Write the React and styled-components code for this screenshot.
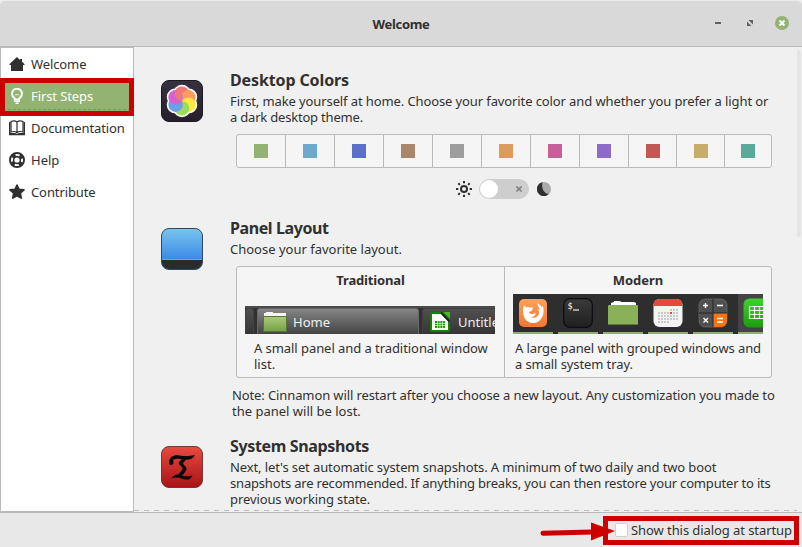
import React from "react";
import styled, { createGlobalStyle } from "styled-components";

const Global = createGlobalStyle`
  *, *::before, *::after { box-sizing: border-box; }
  body { margin: 0; background: #f0f0f0; overflow: hidden; }
`;

const Window = styled.div`
  position: relative;
  width: 802px;
  height: 547px;
  display: grid;
  grid-template-rows: 47px 466px 34px;
  font-family: "Noto Sans", "Open Sans", sans-serif;
  font-size: 13px;
  line-height: 16px;
  color: #303030;
  background: #f0f0f0;
  overflow: hidden;
`;

const Header = styled.header`
  display: grid;
  grid-template-columns: 1fr auto 1fr;
  align-items: center;
  background: #d9d9d9;
  border-top: 1px solid #ececec;
  border-bottom: 1px solid #b9b9b9;
  border-radius: 5px 5px 0 0;
  font-weight: 700;
`;

const Controls = styled.div`
  display: flex;
  justify-content: flex-end;
  padding: 0 12px 1px 0;
`;

const Body = styled.div`
  display: grid;
  grid-template-columns: 134px 1fr;
  min-height: 0;
`;

const Sidebar = styled.nav`
  background: #fff;
  border: 1px solid #bababa;
  border-bottom-width: 2px;
`;

const NavItem = styled.div`
  display: flex;
  align-items: center;
  gap: 6px;
  height: 32px;
  padding: 0 0 0 8px;
  color: ${(p) => (p.$active ? "#fff" : "#303030")};
  background: ${(p) => (p.$active ? "#92b372" : "transparent")};
  outline: ${(p) => (p.$active ? "1px dashed #9b8a55" : "none")};
  outline-offset: -3px;
`;

const Text = styled.span`
  display: block;
  white-space: pre;
  letter-spacing: ${(p) => p.$track || 0}px;
`;

const Content = styled.main`
  display: grid;
  grid-template-columns: 1fr 5px;
  overflow: hidden;
  border-bottom: 1px solid #bababa;
`;

const Sections = styled.div`
  padding: 24px 0 0 27px;
  height: 464px;
  overflow: hidden;
  background: repeating-linear-gradient(90deg, #bdbdbd 0 5px, transparent 5px 10px) 0 463px / 664px 1px no-repeat;
`;

const Scrollbar = styled.div`
  width: 4px;
  height: 187px;
  margin-top: 3px;
  border-radius: 2px;
  background: #e4e4e4;
`;

const Section = styled.section`
  display: grid;
  grid-template-columns: 69px 1fr;
  height: ${(p) => p.$height}px;
`;

const SectionIcon = styled.svg`
  width: 42px;
  height: 42px;
  margin-top: 9px;
`;

const Heading = styled.h2`
  margin: 0 0 4px;
  font-size: 16px;
  line-height: 18px;
  font-weight: 700;
  white-space: pre;
  letter-spacing: ${(p) => p.$track || 0}px;
`;

const Swatches = styled.div`
  display: grid;
  grid-template-columns: repeat(8, 49px) 48px 48px 46px;
  width: 536px;
  height: 34px;
  margin: 9px 0 0 6px;
  border: 1px solid #bababa;
  border-radius: 3px;
  background: #f5f5f5;
`;

const SwatchCell = styled.div`
  display: grid;
  place-items: center;
  border-right: 1px solid #bababa;
  &:last-child { border-right: 0; }
`;

const Swatch = styled.i`
  width: 14px;
  height: 14px;
  background: ${(p) => p.$color};
`;

const ModeRow = styled.div`
  display: flex;
  align-items: center;
  margin: 11px 0 0 226px;
`;

const Switch = styled.div`
  display: flex;
  align-items: center;
  justify-content: space-between;
  width: 50px;
  height: 20px;
  margin: 0 8px 0 7px;
  padding: 0 7px 0 1px;
  border-radius: 10px;
  background: #cecece;
`;

const Knob = styled.i`
  width: 18px;
  height: 18px;
  border-radius: 50%;
  background: #fff;
`;

const Layouts = styled.div`
  display: grid;
  grid-template-columns: 268px 1fr;
  width: 536px;
  height: 112px;
  margin: 9px 0 9px 6px;
  border: 1px solid #bababa;
  border-radius: 3px;
  background: #f5f5f5;
`;

const Layout = styled.div`
  padding: 5px 8px 0;
  border-right: ${(p) => (p.$divided ? "1px solid #bababa" : "0")};
`;

const LayoutTitle = styled.div`
  height: ${(p) => p.$height}px;
  text-align: center;
  font-weight: 700;
`;

const LayoutCaption = styled.div`
  padding: 6px 0 0 ${(p) => p.$indent}px;
`;

const SmallPanel = styled.div`
  display: grid;
  grid-template-columns: 9px 3px 162px 3px 1fr;
  width: 250px;
  height: 28px;
  overflow: hidden;
  color: #efefef;
  border-top: 2px solid #4c4c4c;
  background: #323232;
`;

const Task = styled.div`
  grid-column: ${(p) => p.$column};
  display: flex;
  align-items: center;
  gap: ${(p) => p.$gap || 0}px;
  padding-left: ${(p) => p.$inset || 0}px;
  white-space: nowrap;
  border: 1px solid ${(p) => (p.$active ? "#686868" : "#414141")};
  border-bottom: 0;
  border-radius: 3px 3px 0 0;
  background: ${(p) =>
    p.$active ? "linear-gradient(#858585, #444)" : "linear-gradient(#505050, #353535)"};
`;

const LargePanel = styled.div`
  display: flex;
  gap: 5px;
  width: 250px;
  height: 40px;
  overflow: hidden;
  background: #2e2e2e;
`;

const Launcher = styled.div`
  flex: 0 0 40px;
  height: 40px;
  padding: 4px 5px 0;
  border-bottom: 2px solid #92ad76;
  background: ${(p) => (p.$lit ? "#444" : "transparent")};
  svg { display: block; }
`;

const Note = styled.div`
  padding-left: 2px;
`;

const Footer = styled.footer`
  display: flex;
  align-items: center;
  justify-content: flex-end;
  gap: 3px;
  padding-right: 10px;
  background: #e8e8e8;
`;

const Checkbox = styled.i`
  width: 13px;
  height: 14px;
  background: #fff;
  border: 1px solid #d0d0d0;
  border-radius: 2px;
`;

const Highlight = styled.div`
  position: absolute;
  left: ${(p) => p.$x}px;
  top: ${(p) => p.$y}px;
  width: ${(p) => p.$w}px;
  height: ${(p) => p.$h}px;
  border: 5px solid #cc0000;
`;

const Arrow = styled.svg`
  position: absolute;
  left: 540px;
  top: 520px;
`;

const HomeIcon = () => (
  <svg width="16" height="16" viewBox="0 0 16 16" fill="#303030">
    <path d="M8 1 .5 8v1H2v6h12V9h1.500V8L13 5.700V3h-2v.900z" />
  </svg>
);
const BulbIcon = () => (
  <svg width="16" height="16" viewBox="0 0 16 16" fill="none" stroke="#fff">
    <path d="M5.800 10.500C4.300 9.300 3 8 3 5.800a5 5 0 0 1 10 0c0 2.200-1.300 3.500-2.800 4.700v1H5.800z" strokeWidth="2" />
    <path d="M6 6.500 7 7l1-.600L9 7l1-.500" strokeWidth=".8" />
    <path d="M5 13.300h6M6.500 15.200h3" strokeWidth="1.500" />
  </svg>
);
const BookIcon = () => (
  <svg width="16" height="16" viewBox="0 0 16 16">
    <path d="M2 1.500C4 .6 6.500.6 8 2c1.500-1.400 4-1.400 6-.5V12c-2-.7-4.500-.6-6 .8C6.500 11.400 4 11.300 2 12zM8 2v11" fill="#fff" stroke="#303030" strokeWidth="1.200" />
    <path d="M.7 2v12.600h14.600V2" fill="none" stroke="#303030" strokeWidth="1.400" />
    <path d="M1 13h5l2 1 2-1h5v2H1z" fill="#303030" />
  </svg>
);
const HelpIcon = () => (
  <svg width="16" height="16" viewBox="0 0 16 16">
    <circle cx="8" cy="8" r="5.300" fill="none" stroke="#303030" strokeWidth="5.400" />
    <circle cx="8" cy="8" r="5.100" fill="none" stroke="#fff" strokeWidth="1.900" strokeDasharray="4.200 3.810" strokeDashoffset="2.100" />
  </svg>
);
const StarIcon = () => (
  <svg width="16" height="16" viewBox="0 0 16 16" fill="#303030" stroke="#303030" strokeWidth="1.600" strokeLinejoin="round">
    <path d="m8 1 2 4.300 5 .600-3.700 3.300 1 4.900L8 11.800l-4.300 2.300 1-4.900L1 5.900l5-.600z" />
  </svg>
);

const petals = ["#ee7777", "#ff9c5b", "#ffe83e", "#9bdc5c", "#6b9fe8", "#d661cf"];
const petalAt = (i, r) => {
  const a = ((-90 + i * 60) * Math.PI) / 180;
  return { cx: 21 + r * Math.cos(a), cy: 21 + r * Math.sin(a) };
};
const ColorsIcon = () => (
  <SectionIcon viewBox="0 0 42 42">
    <defs>
      <linearGradient id="night" x2="0" y2="1"><stop stopColor="#37313f" /><stop offset="1" stopColor="#261f2b" /></linearGradient>
      <clipPath id="leftHalf"><path d="M0 0h21v21H0z" /></clipPath>
    </defs>
    <rect x=".5" y=".5" width="41" height="41" rx="7.500" fill="url(#night)" stroke="#1c1820" />
    {petals.map((c, i) => <circle key={c} {...petalAt(i, 7.8)} r="8.500" fill="#fff" />)}
    {petals.map((c, i) => <circle key={c} {...petalAt(i, 7.4)} r="7.200" fill={c} />)}
    <circle {...petalAt(0, 7.4)} r="7.200" fill={petals[0]} clipPath="url(#leftHalf)" />
  </SectionIcon>
);
const PanelIcon = () => (
  <SectionIcon viewBox="0 0 42 42">
    <defs><linearGradient id="sky" x2="0" y2="1"><stop stopColor="#78c4ee" /><stop offset=".75" stopColor="#3d8ae6" /></linearGradient></defs>
    <rect x=".5" y=".5" width="41" height="41" rx="7.500" fill="url(#sky)" stroke="#33495b" />
    <path d="M1 32h40v2a7 7 0 0 1-7 7H8a7 7 0 0 1-7-7z" fill="#2b2b2b" />
    <path d="M1 31.500h40" stroke="#60a5f0" />
  </SectionIcon>
);
const SnapshotIcon = () => (
  <SectionIcon viewBox="0 0 42 42">
    <defs><linearGradient id="ruby" x2="0" y2="1"><stop stopColor="#e84a40" /><stop offset="1" stopColor="#aa1216" /></linearGradient></defs>
    <rect x=".5" y=".5" width="41" height="41" rx="7.500" fill="url(#ruby)" stroke="#6c3a38" />
    <g fill="#080606">
      <path d="M34 9C32 13 28 14.200 24 13.700 19 13 15 12 12.500 13.500 11.500 14.500 13.200 16 12 18c-1.200 2-4 1.200-4-1.200C7.700 13 11 9.300 15 9.300c5 0 10 1.900 19-.3z" />
      <path d="M21 13c-3 2.500-4 4-2.500 5.700L21 21c1.200 1.500.2 3-4.300 8.200l3.800 1c3-3.200 5.300-6 5-7.700-.4-2-3.300-3.400-3.300-5 0-1.100 2-2.600 3-4z" />
      <path d="M10.500 32.500C13 28.500 16 27.800 19 28.800c4 1.600 8 2.200 12.500.6-1.500 3.600-4.500 4.700-8.500 3.900-5-1.100-8-2.700-12.500-.8z" />
    </g>
  </SectionIcon>
);

const SunIcon = () => (
  <svg width="16" height="16" viewBox="0 0 16 16" fill="none" stroke="#303030" strokeWidth="2">
    <circle cx="8" cy="8" r="3" />
    <path d="M8 0v2.300M8 13.700V16M0 8h2.300M13.700 8H16M2.300 2.300l1.600 1.600M12.100 12.100l1.600 1.600M2.300 13.700l1.600-1.600M12.100 3.900l1.600-1.600" />
  </svg>
);
const MoonIcon = () => (
  <svg width="14" height="14" viewBox="0 0 14 14">
    <circle cx="7" cy="7" r="7" fill="#ababab" />
    <path d="M5.500.2A7 7 0 1 0 12 11.800C7 12 4 6 5.500.2z" fill="#303030" />
  </svg>
);
const OffMark = () => (
  <svg width="6" height="6" viewBox="0 0 6 6" stroke="#858585" strokeWidth="1.600"><path d="m.4.4 5.200 5.200m0-5.200L.4 5.600" /></svg>
);

const WindowButtons = () => (
  <svg width="76" height="16" viewBox="0 0 76 16">
    <path d="M1 8h6" stroke="#606060" strokeWidth="2" />
    <path d="M34.500 5H39v4.500zM33 6.500 37.500 11H33z" fill="#606060" />
    <circle cx="68" cy="8" r="7" fill="#92b372" />
    <path d="m65.500 5.500 5 5m0-5-5 5" stroke="#fff" strokeWidth="2" />
  </svg>
);

const FolderSmall = () => (
  <svg width="24" height="22" viewBox="0 0 24 22">
    <defs><linearGradient id="leaf" x2="0" y2="1"><stop stopColor="#a9cb7c" /><stop offset="1" stopColor="#74a044" /></linearGradient></defs>
    <path d="M1 6V2h2V1h7v1h13v5H1z" fill="#f5f5f5" />
    <path d="M.5 5.500h23v15H.5z" fill="url(#leaf)" stroke="#587534" />
  </svg>
);
const CalcSmall = () => (
  <svg width="20" height="20" viewBox="0 0 20 20">
    <rect width="20" height="20" rx="2" fill="#148500" />
    <path d="M2 2h9l7 7v9H2z" fill="#fff" />
    <path d="M13.500 0H20v6.500z" fill="#45bd25" /><path d="m11 .5 8.500 9" stroke="#222" strokeWidth="2" />
    <rect x="5" y="9" width="10" height="7" fill="#289b14" />
    <path d="M5 11.500h10M5 13.500h10M7.500 9v7M10 9v7M12.500 9v7" stroke="#d5f1cf" strokeWidth=".7" />
  </svg>
);
const Firefox = () => (
  <svg width="30" height="30" viewBox="0 0 30 30">
    <defs><linearGradient id="fox" x2="0" y2="1"><stop stopColor="#ffa257" /><stop offset="1" stopColor="#f47631" /></linearGradient></defs>
    <rect x="1" y="1" width="28" height="28" rx="5" fill="url(#fox)" />
    <path d="M6 7.500 8.500 9.500c1.500-.8 3-.5 3.500.3L15 9l-1 3.500-3 1.500c.3 2 3 2.700 5 1.500.8-.4 2 .1 1.500 1-1.200 2.200-3 2.500-4.500 2.500 3.500 2 7.500 0 8-4 .2-2-.5-3-1.200-4 .9.300 1.700.9 2 1.500C21.500 9 19 8 19.500 4.500c.7 2 3.300 2.500 4.300 4.700l.7-1.500C26 11 26 15 24.500 18.500 21 26.500 10.500 27.500 6.500 20 4.700 16 4.500 11 6 7.500z" fill="#fff" />
  </svg>
);
const Terminal = () => (
  <svg width="30" height="30" viewBox="0 0 30 30">
    <defs><linearGradient id="shell" x2="0" y2="1"><stop stopColor="#3a3a3a" /><stop offset="1" stopColor="#202020" /></linearGradient></defs>
    <rect x=".7" y=".7" width="28.600" height="28.600" rx="6" fill="url(#shell)" stroke="#0d0d0d" strokeWidth="1.200" />
    <text x="4.500" y="10.500" fill="#fff" fontFamily="DejaVu Sans Mono" fontSize="8.500">$</text>
    <path d="M10 12h6" stroke="#fff" strokeWidth="1.100" />
  </svg>
);
const FolderLarge = () => (
  <svg width="30" height="30" viewBox="0 0 30 30">
    <path d="M3 8V5l3-1V3h6l1 1h13l2 1v4H3z" fill="#fff" />
    <rect x="0" y="7" width="30" height="20" rx="1" fill="#89b158" />
    <path d="M0 26.500h30" stroke="#5c793d" />
  </svg>
);
const calendarCells = Array.from({ length: 28 }, (_, i) => i + 4);
const Calendar = () => (
  <svg width="30" height="30" viewBox="0 0 30 30">
    <rect x=".5" y="1" width="29" height="28" rx="6" fill="#f3f3f3" />
    <path d="M.5 8V7a6 6 0 0 1 6-6h17a6 6 0 0 1 6 6v1z" fill="#e64939" />
    {calendarCells.map((i) => (
      <rect key={i} x={5 + (i % 7) * 3} y={11 + Math.floor(i / 7) * 3} width="2" height="2" fill={i === 11 ? "#e64939" : "#c9c9c9"} />
    ))}
  </svg>
);
const Calculator = () => (
  <svg width="30" height="30" viewBox="0 0 30 30">
    <rect x="1" y="1" width="28" height="28" rx="6" fill="#505050" stroke="#777" strokeWidth=".6" />
    <path d="M15 15h14v8a6 6 0 0 1-6 6h-8z" fill="#f57416" />
    <path d="M15 1v28M1 15h28" stroke="#242424" />
    <path d="M5 7.500h5M7.500 5v5M19 7.500h6M5.500 20l4.500 4.500m0-4.500-4.500 4.500M19 20.500h6m-6 3.500h6" stroke="#fff" strokeWidth="1.400" />
  </svg>
);
const SheetLarge = () => (
  <svg width="30" height="30" viewBox="0 0 30 30">
    <defs><linearGradient id="mint" x2="0" y2="1"><stop stopColor="#3fd22c" /><stop offset="1" stopColor="#1a9e0c" /></linearGradient></defs>
    <rect x=".5" y=".5" width="29" height="29" rx="6" fill="url(#mint)" />
    <path d="M6.500 8.500h18v12h-18zM6.500 12.500h18M6.500 16.500h18M11.500 8.500v12M16.500 8.500v12" fill="none" stroke="#fff" strokeWidth="1.200" />
  </svg>
);

const navItems = [
  { label: "Welcome", Icon: HomeIcon, track: -0.1 },
  { label: "First Steps", Icon: BulbIcon, track: -0.1, active: true },
  { label: "Documentation", Icon: BookIcon, track: -0.1 },
  { label: "Help", Icon: HelpIcon, track: 0 },
  { label: "Contribute", Icon: StarIcon, track: -0.1 },
];
const colors = ["#92b372", "#6ca9cc", "#5972c7", "#aa876a", "#9d9d9d", "#dc9c60", "#c75f98", "#8d6bc9", "#c15855", "#c8ac69", "#59aa99"];

export default function App() {
  return (
    <Window>
      <Global />
      <Header>
        <span />
        <Text $track={-0.3}>Welcome</Text>
        <Controls><WindowButtons /></Controls>
      </Header>
      <Body>
        <Sidebar>
          {navItems.map(({ label, Icon, track, active }) => (
            <NavItem key={label} $active={active}><Icon /><Text $track={track}>{label}</Text></NavItem>
          ))}
        </Sidebar>
        <Content>
          <Sections>
            <Section $height={148}>
              <ColorsIcon />
              <div>
                <Heading $track={-0.12}>Desktop Colors</Heading>
                <Text $track={-0.108}>First, make yourself at home. Choose your favorite color and whether you prefer a light or</Text>
                <Text $track={-0.2}>a dark desktop theme.</Text>
                <Swatches>{colors.map((c) => <SwatchCell key={c}><Swatch $color={c} /></SwatchCell>)}</Swatches>
                <ModeRow><SunIcon /><Switch><Knob /><OffMark /></Switch><MoonIcon /></ModeRow>
              </div>
            </Section>
            <Section $height={218}>
              <PanelIcon />
              <div>
                <Heading $track={-0.4}>Panel Layout</Heading>
                <Text>Choose your favorite layout.</Text>
                <Layouts>
                  <Layout $divided>
                    <LayoutTitle $height={34}><Text $track={-0.15}>Traditional</Text></LayoutTitle>
                    <SmallPanel>
                      <Task $column={1} />
                      <Task $column={3} $active $inset={5} $gap={6}><FolderSmall /><Text>Home</Text></Task>
                      <Task $column={5} $inset={7} $gap={8}><CalcSmall /><Text>Untitled</Text></Task>
                    </SmallPanel>
                    <LayoutCaption $indent={9}>
                      <Text $track={-0.06}>A small panel and a traditional window</Text>
                      <Text>list.</Text>
                    </LayoutCaption>
                  </Layout>
                  <Layout>
                    <LayoutTitle $height={22}><Text $track={-0.05}>Modern</Text></LayoutTitle>
                    <LargePanel>
                      <Launcher><Firefox /></Launcher>
                      <Launcher><Terminal /></Launcher>
                      <Launcher><FolderLarge /></Launcher>
                      <Launcher><Calendar /></Launcher>
                      <Launcher><Calculator /></Launcher>
                      <Launcher $lit><SheetLarge /></Launcher>
                    </LargePanel>
                    <LayoutCaption $indent={2}>
                      <Text $track={-0.09}>A large panel with grouped windows and</Text>
                      <Text $track={-0.1}>a small system tray.</Text>
                    </LayoutCaption>
                  </Layout>
                </Layouts>
                <Note>
                  <Text $track={-0.112}>Note: Cinnamon will restart after you choose a new layout. Any customization you made to</Text>
                  <Text>the panel will be lost.</Text>
                </Note>
              </div>
            </Section>
            <Section $height={74}>
              <SnapshotIcon />
              <div>
                <Heading $track={-0.35}>System Snapshots</Heading>
                <Text $track={-0.115}>Next, let's set automatic system snapshots. A minimum of two daily and two boot</Text>
                <Text $track={-0.185}>snapshots are recommended. If anything breaks, you can then restore your computer to its</Text>
                <Text $track={-0.1}>previous working state.</Text>
              </div>
            </Section>
          </Sections>
          <Scrollbar />
        </Content>
      </Body>
      <Footer><Checkbox /><Text $track={-0.075}>Show this dialog at startup</Text></Footer>
      <Highlight $x={0} $y={78} $w={134} $h={38} />
      <Highlight $x={603} $y={516} $w={196} $h={29} />
      <Arrow width="76" height="24" viewBox="0 0 76 24">
        <path d="M3 13.300 52 12" stroke="#cc0000" strokeWidth="5" strokeLinecap="round" />
        <path d="M51 2.500 75 11 51 20.500z" fill="#cc0000" />
      </Arrow>
    </Window>
  );
}
